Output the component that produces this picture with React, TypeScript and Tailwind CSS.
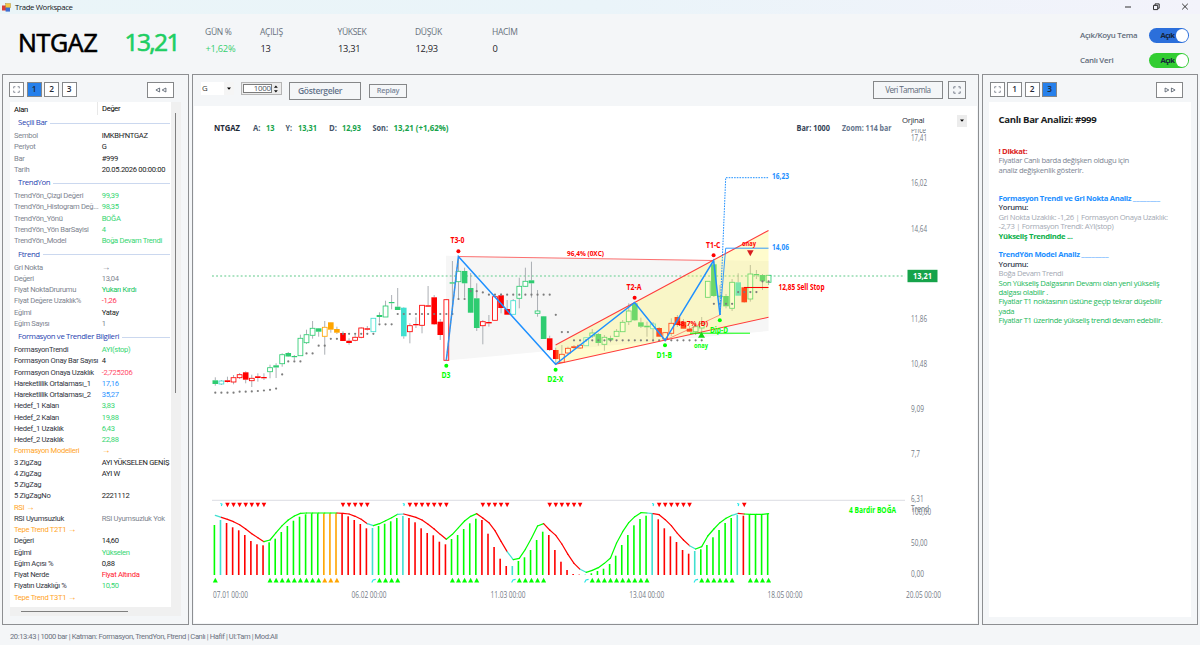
import React from "react";

type Bar = [string, number, number, number, number]; // kind, high, top, bottom, low

const GREEN = "#2ecc71";
const RED = "#ff0000";
const CYAN = "#40e0d0";
const ORANGE = "#ffa500";
const LIME = "#00ff00";

const KIND: Record<string, string> = { g: GREEN, r: RED, c: CYAN, o: ORANGE };

// Lower-case kinds are filled bodies, upper-case kinds are hollow ones.
const BARS: Bar[] = [
  ["g", 377.3, 380.3, 384, 385.7], ["C", 380, 381, 384, 385], ["r", 376.7, 380.3, 382, 382.5],
  ["R", 375, 377.7, 382, 384.3], ["R", 373, 374.7, 377.7, 379], ["r", 371.3, 372.3, 379.7, 383.3],
  ["R", 374.7, 378.3, 380.7, 387], ["r", 373.3, 376.3, 378, 381.7], ["r", 373.3, 377, 378.3, 380],
  ["G", 364.7, 367.7, 371.7, 378.3], ["g", 363.3, 365.3, 367.5, 378], ["G", 353.3, 354.7, 363.7, 366.7],
  ["g", 352, 353, 356.5, 357], ["g", 355, 356, 357.2, 360], ["G", 334.7, 338.3, 355.7, 355.7],
  ["G", 329.7, 334.7, 342.7, 344], ["G", 321, 328.3, 335.3, 338.7], ["g", 328, 328.3, 331.7, 336.7],
  ["O", 321, 327.3, 336.3, 354.7], ["o", 322, 322.3, 329.7, 332.7], ["o", 326.7, 329, 332.7, 334],
  ["r", 331.3, 333, 341, 341], ["r", 338.3, 340.7, 343, 344.7], ["R", 335, 337.3, 340.3, 341.3],
  ["R", 327.3, 328, 337.3, 338.3], ["r", 326, 328.3, 329.7, 330.5], ["C", 318, 318.3, 331.7, 332],
  ["g", 312.3, 315, 317, 322.7], ["G", 300.7, 306, 317, 317], ["g", 295, 302, 303.2, 309.3],
  ["g", 288, 306.7, 310, 310], ["c", 307, 307.7, 336.3, 338.7], ["R", 323.3, 325.7, 331.7, 343.3],
  ["r", 317.3, 324, 325.3, 328], ["R", 305.3, 305.3, 325.3, 333.3], ["r", 286, 305.3, 306.7, 307],
  ["r", 295, 297.3, 324.3, 325], ["r", 319, 321.7, 335, 340], ["R", 299, 299.7, 360.3, 360.3],
  ["g", 261, 282.3, 283.6, 314], ["G", 257, 271.3, 281.7, 298.3], ["g", 267.7, 271, 283.3, 297.7],
  ["g", 273, 288, 312.7, 313], ["g", 283.3, 298.3, 328, 331], ["R", 320, 321.7, 325.7, 344.3],
  ["r", 315, 322, 323.4, 326.7], ["R", 296.7, 296.7, 320.3, 320.3], ["r", 293.3, 295.3, 308, 313.3],
  ["r", 300, 309, 314.7, 314.7], ["C", 299, 300.7, 314.3, 314.3], ["G", 277.7, 286.3, 298.3, 308.3],
  ["G", 267.7, 281.3, 286.3, 287], ["g", 261.7, 280.3, 283.3, 297.7], ["G", 290, 311, 313.3, 316.7],
  ["g", 316, 316.3, 339, 339], ["r", 335.7, 338.3, 350, 351], ["r", 347.7, 350, 359, 364],
  ["R", 345, 354.3, 362.3, 363], ["R", 346.7, 348.3, 353, 354], ["r", 345, 346.3, 348, 349],
  ["R", 344, 345.3, 348, 349], ["C", 337, 337.7, 345.7, 346], ["G", 329, 333, 336, 338],
  ["g", 333, 334, 343, 345.7], ["G", 335, 337.3, 344.3, 350.7], ["g", 335.7, 338, 340.3, 342.3],
  ["G", 329, 331.3, 336.3, 337], ["G", 320, 322.3, 331.7, 332], ["G", 303.3, 311, 321.7, 325],
  ["g", 303, 303.3, 320.3, 321], ["g", 317.7, 322.3, 326.7, 328], ["g", 321.7, 325.7, 327.3, 336.7],
  ["C", 322, 324, 328.7, 341.7], ["r", 327, 328, 336.7, 337], ["R", 332, 332.7, 339, 340],
  ["R", 318.3, 323.3, 333.3, 336], ["r", 315, 317, 325, 327], ["r", 319, 321.7, 328.7, 329],
  ["r", 326, 328.7, 331.7, 332], ["G", 322, 326.7, 331.7, 335], ["G", 317, 323.3, 328, 336],
  ["G", 281, 281.3, 297.3, 298], ["g", 261, 264.3, 296, 297], ["g", 285, 295.7, 297.2, 314],
  ["g", 294, 296, 306.3, 308.3], ["G", 279, 282.3, 308.3, 311], ["c", 273.3, 282.3, 295.7, 296],
  ["r", 287, 287.3, 302.3, 303], ["G", 265, 274, 299, 301.7], ["g", 270, 274, 275.3, 279],
  ["g", 274, 275, 281.3, 290], ["G", 275, 275.3, 282.3, 285],
];

// [first bar, last bar, y]
const DOTS: [number, number, number][] = [
  [0, 3, 392.7], [4, 5, 391.7], [6, 6, 391.4], [7, 7, 391], [8, 8, 390.5], [9, 9, 389.8], [10, 10, 388.6],
  [11, 11, 374.4], [12, 14, 361.4], [15, 16, 353.4], [17, 18, 345.7], [19, 20, 338.8], [21, 26, 333.8],
  [27, 29, 324.3], [30, 39, 314], [40, 41, 299], [42, 43, 291.2], [44, 44, 292.4], [45, 55, 294.7],
  [56, 56, 314.8], [57, 58, 332.1], [59, 80, 340.3], [82, 85, 303.8], [86, 89, 292.1], [90, 91, 281.4],
];

// [colour, first bar, bar tops]
const HISTOGRAM: [string, number, number[]][] = [
  [LIME, 0, [525]], [CYAN, 1, [520]], [RED, 2, [523, 527.3, 530.3, 535, 541, 544.3, 545.3]],
  [LIME, 9, [542.3, 538.7, 532, 526, 520.7, 516.7, 514.3, 513.3, 513.3]],
  [ORANGE, 18, [513.3, 513.3, 513.3]], [RED, 21, [513.3, 516.3, 520, 524, 528.3]], [CYAN, 26, [528]],
  [LIME, 27, [526, 523.7, 521.3, 518]], [CYAN, 31, [516]],
  [RED, 32, [518, 522.3, 528.3, 533, 535.3, 541.7, 544.3]],
  [LIME, 39, [539, 535, 529, 523.3, 518.7]], [RED, 44, [520, 533.7, 547, 558.7, 566]], [CYAN, 49, [566]],
  [LIME, 50, [561, 557.3, 550, 540, 531.7]], [RED, 55, [535, 550, 561.7, 570, 574, 574.6]], [CYAN, 61, [574.6]],
  [LIME, 62, [573.3, 571, 568.7, 564, 555.7, 545, 535, 525.3, 519, 515.7]], [CYAN, 72, [514]],
  [RED, 73, [519.3, 528.3, 536.3, 542, 550, 553.7]], [CYAN, 79, [551]],
  [LIME, 80, [549.3, 545, 537.3, 530, 523, 518]], [CYAN, 86, [515]], [RED, 87, [515.7]],
  [LIME, 88, [514.3, 514.3, 514.3, 513.7]],
];

const CURVE = [
  76, 82, 88, 95, 104, 117, 131, 143, 155, 150, 128, 107, 90, 78, 70, 69, 69, 69, 69, 69, 69, 70, 72, 79, 88, 101, 107,
  101, 92, 83, 73, 72, 77, 82, 90, 103, 117, 133, 148, 133, 113, 93, 79, 71, 84, 98, 122, 154, 185, 209, 205, 178, 145,
  108, 101, 120, 136, 162, 193, 220, 238, 247, 241, 233, 220, 204, 159, 125, 98, 80, 68, 69, 71, 74, 89, 107, 130, 150,
  167, 177, 170, 138, 117, 98, 85, 76, 70, 72, 73, 73, 73, 71,
].map((v) => 490 + v / 3);

const barX = (i: number) => 215.3 + i * 6.08;

const COLORS: string[] = HISTOGRAM.flatMap(([color, , tops]) => tops.map(() => color));

type LabelProps = {
  x: number;
  y: number;
  w: number;
  fill: string;
  size?: number;
  weight?: number;
  children: string;
};

function Label({ x, y, w, fill, size = 8.1, weight = 400, children }: LabelProps) {
  return (
    <text x={x} y={y + size * 0.36} fill={fill} fontSize={size} fontWeight={weight} textLength={w} lengthAdjust="spacingAndGlyphs">
      {children}
    </text>
  );
}

function Chart() {
  return (
    <svg viewBox="194 106 783 517" width="783" height="517" className="block">
      <polygon points="446,255.8 768.5,261 768.5,331 446,360.5" fill="#f6f6f6" />
      <line x1="212" x2="905" y1="276" y2="276" stroke="#93dbb0" strokeWidth="1.4" strokeDasharray="1.9 2.2" />

      {BARS.map(([kind, high, top, bottom, low], i) => {
        const solid = kind === kind.toLowerCase();
        const color = KIND[kind.toLowerCase()];
        const x = barX(i);
        return (
          <g key={i}>
            <line x1={x} x2={x} y1={high} y2={top} stroke="#a3a7ad" strokeWidth="0.9" />
            <line x1={x} x2={x} y1={bottom} y2={low} stroke="#a3a7ad" strokeWidth="0.9" />
            <rect
              x={solid ? x - 2.8 : x - 2.4}
              y={top}
              width={solid ? 5.6 : 4.8}
              height={bottom - top}
              fill={solid ? color : "#ffffff"}
              stroke={solid ? "none" : color}
              strokeWidth="0.85"
            />
          </g>
        );
      })}

      <polygon points="555.6,345 768.5,230.5 768.5,317.3 555.6,364.3" fill="#fff65a" fillOpacity="0.3" />

      {DOTS.flatMap(([from, to, y]) =>
        Array.from({ length: to - from + 1 }, (_, k) => (
          <circle key={`${from + k}-${y}`} cx={barX(from + k)} cy={y} r="1.1" fill="#7d7d7d" />
        )),
      )}

      <g fill="none" stroke="#ff3b3b" strokeWidth="1.1">
        <path d="M555.6 345 768.5 230.5M555.6 364.3 768.5 317.3" />
        <path d="M458.4 256.5 713.5 260.5" strokeWidth="0.9" strokeOpacity="0.8" />
        <path d="M665 340.3 720 315" strokeWidth="0.7" strokeOpacity="0.8" />
        <path d="M744 287.5H768.5" stroke="#ff0000" />
      </g>
      <path d="M690 333.2H750" stroke={LIME} strokeWidth="1" />
      <path
        d="M446.3 360.3 458.4 256.5 555.6 364.3 634.6 302.5 665 340.3 713.6 260.5 720 315"
        fill="none"
        stroke="#1e90ff"
        strokeWidth="1.5"
      />
      <path d="M446.3 360.3 458.4 256.5" stroke="#8b8b8b" strokeWidth="0.7" strokeDasharray="2 2" />
      <path d="M720 315 725.7 248.2H768.5" fill="none" stroke="#1e90ff" strokeWidth="0.9" />
      <path d="M720 315 725.7 177.7H768.5" fill="none" stroke="#1e90ff" strokeWidth="1" strokeDasharray="1.6 1.1" />

      <g fill={RED}>
        <circle cx="458.4" cy="251.2" r="2" />
        <circle cx="634.6" cy="297.8" r="2" />
        <circle cx="713.6" cy="255.2" r="2" />
        <path d="M747 250.2H753.6L750.3 256.2Z" fill="#d81e1e" />
      </g>
      <g fill={LIME}>
        <circle cx="446.3" cy="365.7" r="2" />
        <circle cx="555.6" cy="369.8" r="2" />
        <circle cx="665" cy="345.2" r="2" />
        <circle cx="719.8" cy="320.2" r="2" />
        <path d="M698 337.8H705L701.5 331.8Z" fill="#16d916" />
      </g>

      <Label x={450.5} y={240.5} w={14} fill={RED} weight={700}>T3-0</Label>
      <Label x={567} y={253.8} w={37} fill={RED} weight={700} size={7.4}>96,4% (0XC)</Label>
      <Label x={626.5} y={287.3} w={15} fill={RED} weight={700}>T2-A</Label>
      <Label x={706} y={244.8} w={14.5} fill={RED} weight={700}>T1-C</Label>
      <Label x={742} y={243.2} w={14} fill={RED} weight={700} size={7.4}>onay</Label>
      <Label x={677} y={323.3} w={31} fill={RED} weight={700} size={7.4}>48,7% (D)</Label>
      <Label x={778.5} y={286.6} w={46} fill={RED} weight={700}>12,85 Sell Stop</Label>
      <Label x={441.5} y={375.4} w={9} fill={LIME} weight={700}>D3</Label>
      <Label x={547.3} y={379.2} w={16} fill={LIME} weight={700}>D2-X</Label>
      <Label x={656.5} y={354.8} w={15.5} fill={LIME} weight={700}>D1-B</Label>
      <Label x={710} y={330.3} w={18} fill={LIME} weight={700}>Dip-D</Label>
      <Label x={694} y={345.3} w={14} fill={LIME} weight={700} size={7.4}>onay</Label>
      <Label x={772} y={176.4} w={17} fill="#1e90ff" weight={700}>16,23</Label>
      <Label x={772} y={247.2} w={17} fill="#1e90ff" weight={700}>14,06</Label>

      <Label x={214} y={128} w={26} fill="#1f2937" weight={700}>NTGAZ</Label>
      <Label x={253} y={128} w={7.5} fill="#475569" weight={700}>A:</Label>
      <Label x={266} y={128} w={8.5} fill="#16a34a" weight={700}>13</Label>
      <Label x={285.5} y={128} w={6.5} fill="#475569" weight={700}>Y:</Label>
      <Label x={298} y={128} w={19} fill="#16a34a" weight={700}>13,31</Label>
      <Label x={329} y={128} w={8} fill="#475569" weight={700}>D:</Label>
      <Label x={342} y={128} w={19} fill="#16a34a" weight={700}>12,93</Label>
      <Label x={372.5} y={128} w={15.5} fill="#475569" weight={700}>Son:</Label>
      <Label x={393.5} y={128} w={55} fill="#16a34a" weight={700}>13,21 (+1,62%)</Label>
      <Label x={796.5} y={128} w={33.5} fill="#334155" weight={700}>Bar: 1000</Label>
      <Label x={842} y={128} w={49.5} fill="#64748b" weight={700}>Zoom: 114 bar</Label>

      <Label x={911} y={129.6} w={15} fill="#6b7280">Price</Label>
      <rect x="899" y="113" width="70" height="16" fill="#ffffff" />
      {([["17,41", 138.5, 16], ["16,02", 183.5, 16], ["14,64", 228.7, 16], ["11,86", 319.3, 16], ["10,48", 364.3, 16],
        ["9,09", 409.3, 13], ["7,7", 454.5, 9], ["6,31", 499.4, 12.5], ["50,00", 543.2, 16.5], ["0,00", 573.8, 13]] as [string, number, number][]).map(
        ([text, y, w]) => (
          <Label key={text} x={911} y={y} w={w} fill="#737a85">{text}</Label>
        ),
      )}
      <Label x={911} y={509} w={18} fill="#737a85">Trend</Label>
      <Label x={911.5} y={512.4} w={19.5} fill="#737a85">100,00</Label>
      <rect x="907.5" y="269.8" width="30" height="12.4" fill="#16a34a" />
      <Label x={913} y={276} w={19} fill="#ffffff" weight={700}>13,21</Label>

      <line x1="212" x2="905" y1="500.3" y2="500.3" stroke="#e2e3e8" strokeWidth="1.2" />
      <Label x={849} y={510.5} w={47} fill={LIME} weight={700}>4 Bardir BOĞA</Label>

      {HISTOGRAM.flatMap(([color, first, tops]) =>
        tops.map((top, k) => (
          <rect key={first + k} x={barX(first + k) - 1.7} y={top} width="1.6" height={575 - top} fill={color} />
        )),
      )}
      {CURVE.slice(1).map((y, k) => (
        <line
          key={k}
          x1={barX(k)}
          y1={CURVE[k]}
          x2={barX(k + 1)}
          y2={y}
          stroke={COLORS[k + 1] === ORANGE ? LIME : COLORS[k + 1]}
          strokeWidth="1.2"
          strokeLinecap="round"
        />
      ))}
      {COLORS.map((color, i) => {
        const x = barX(i);
        if (color === RED) return <path key={i} d={`M${x - 2.3} 502.8H${x + 2.3}L${x} 507.2Z`} fill={RED} />;
        if (color === CYAN) {
          const upper = [1, 31, 72, 86].includes(i);
          return upper ? (
            <path key={i} d={`M${x - 1} 503.4l1.6 .6l-.6 2`} fill="none" stroke="#22e6e6" strokeWidth="1.1" />
          ) : (
            <path key={i} d={`M${x - 1.6} 582.6l1.4-2.6l2.6-.6`} fill="none" stroke="#22e6e6" strokeWidth="1.1" />
          );
        }
        return <path key={i} d={`M${x - 2.5} 582.6H${x + 2.5}L${x} 577.8Z`} fill={color} />;
      })}

      {([["07.01 00:00", 213], ["06.02 00:00", 351.5], ["11.03 00:00", 490.5], ["13.04 00:00", 629.3], ["18.05 00:00", 767.5],
        ["20.05 00:00", 906]] as [string, number][]).map(([text, x]) => (
        <Label key={text} x={x} y={594.8} w={35} fill="#737a85">{text}</Label>
      ))}
    </svg>
  );
}

type Row = [string, string, string?, string?]; // field, value, value colour, field colour

const DIM = "text-[#808590]";
const G = "text-[#35d672]";
const K = "text-[#1b1d24]";
const DARK = "text-[#33363f]";
const O = "text-[#ffa51f]";
const B = "text-[#2f95ff]";

const GROUPS: { title: string; rows: Row[] }[] = [
  {
    title: "Seçili Bar",
    rows: [["Sembol", "IMKBH'NTGAZ"], ["Periyot", "G"], ["Bar", "#999"], ["Tarih", "20.05.2026 00:00:00"]],
  },
  {
    title: "TrendYon",
    rows: [
      ["TrendYön_Çizgi Değeri", "99,39", G], ["TrendYön_Histogram Değ...", "98,35", G], ["TrendYön_Yönü", "BOĞA", G],
      ["TrendYön_Yön BarSayisi", "4", G], ["TrendYön_Model", "Boğa Devam Trendi", G],
    ],
  },
  {
    title: "Ftrend",
    rows: [
      ["Gri Nokta", "→", DIM], ["Değeri", "13,04", DIM], ["Fiyat NoktaDrurumu", "Yukarı Kırdı", "text-[#0fc45a]"],
      ["Fiyat Değere Uzaklık%", "-1,26", "text-[#ff3355]"], ["Eğimi", "Yatay"], ["Eğim Sayısı", "1", DIM],
    ],
  },
  {
    title: "Formasyon ve Trendler Bilgileri",
    rows: [
      ["FormasyonTrendi", "AYI(stop)", G, DARK], ["Formasyon Onay Bar Sayısı", "4", K, DARK],
      ["Formasyon Onaya Uzaklık", "-2,725206", "text-[#ff4d6a]", DARK], ["Hareketlilik Ortalaması_1", "17,16", B, DARK],
      ["Hareketlilik Ortalaması_2", "35,27", B, DARK], ["Hedef_1 Kalan", "3,83", G, DARK], ["Hedef_2 Kalan", "19,88", G, DARK],
      ["Hedef_1 Uzaklık", "6,43", G, DARK], ["Hedef_2 Uzaklık", "22,88", G, DARK], ["Formasyon Modelleri", "→", O, O],
      ["3 ZigZag", "AYI YÜKSELEN GENİŞ", K, DARK], ["4 ZigZag", "AYI W", K, DARK], ["5 ZigZag", "", K, DARK],
      ["5 ZigZagNo", "2221112", K, DARK], ["RSI →", "", O, O], ["RSI Uyumsuzluk", "RSI Uyumsuzluk Yok", DIM, DARK],
      ["Tepe Trend T2T1 →", "", O, O], ["Değeri", "14,60", K, DARK], ["Eğimi", "Yükselen", G, DARK],
      ["Eğim Açısı %", "0,88", K, DARK], ["Fiyat Nerde", "Fiyat Altında", "text-[#ff1a2e]", DARK],
      ["Fiyatın Uzaklığı %", "10,50", G, DARK], ["Tepe Trend T3T1 →", "", O, O],
    ],
  },
];

const BUTTON = "flex items-center justify-center border border-[#858789] bg-white";

function CellText({ text }: { text: string }) {
  if (!text.endsWith("→")) return <>{text}</>;
  return (
    <>
      {text.slice(0, -1)}
      <span className="font-['Liberation_Sans',sans-serif] text-[8.5px]">→</span>
    </>
  );
}

function ExpandIcon({ className }: { className: string }) {
  return (
    <svg viewBox="0 0 8 8" className={className} fill="none" stroke="#6b7280" strokeWidth="0.9">
      <path d="M.8 2.7V.8H2.7M5.3.8H7.2V2.7M7.2 5.3V7.2H5.3M2.7 7.2H.8V5.3" />
    </svg>
  );
}

function TabButtons({ active }: { active: number }) {
  return (
    <div className="flex gap-[2.5px]">
      <button className={`${BUTTON} h-[15px] w-[15px]`}>
        <ExpandIcon className="h-[7px] w-[7px]" />
      </button>
      {[1, 2, 3].map((n) => (
        <button
          key={n}
          className={`flex h-[15px] w-[15px] items-center justify-center border border-[#858789] text-[8.3px] font-semibold text-[#1f2937] ${
            n === active ? "bg-[#2680eb]" : "bg-white"
          }`}
        >
          {n}
        </button>
      ))}
    </div>
  );
}

function DoubleArrow({ flip }: { flip?: boolean }) {
  return (
    <svg viewBox="0 0 12 6" className={`h-[6px] w-[12px] ${flip ? "-scale-x-100" : ""}`} fill="none" stroke="#4b5563" strokeWidth="0.8">
      <path d="M4.6 1V5L.9 3ZM10.9 1V5L7.2 3Z" />
    </svg>
  );
}

function TitleBar() {
  return (
    <div className="flex h-[14px] items-center bg-gradient-to-r from-[#eaf5f8] via-[#eaf4f9] to-[#f3f3fb] pl-[2px]">
      <svg viewBox="0 0 9 9" className="h-[9px] w-[9px]">
        <rect x="0" y="2.5" width="5" height="5" fill="#d9403a" />
        <rect x="3.6" y=".5" width="5" height="4.4" fill="#f6c744" stroke="#a98a3c" strokeWidth=".4" />
        <rect x="3.6" y="4.6" width="4.4" height="4" fill="#3f6fd1" />
      </svg>
      <span className="mt-px ml-[4px] text-[7.8px] tracking-[-0.37px] text-[#15181d]">Trade Workspace</span>
      <svg viewBox="0 0 66 10" className="mr-[9px] ml-auto h-[10px] w-[66px]" fill="none" stroke="#1c1c1c" strokeWidth="0.9">
        <path d="M0 5H6M28.5 3.4H32.7V7.6H28.5ZM30 3.2V1.9H34.2V6.2H32.9M57.2 1.8 62.8 7.4M62.8 1.8 57.2 7.4" />
      </svg>
    </div>
  );
}

function Stat({ label, value, className }: { label: string; value: string; className: string }) {
  return (
    <div className={className}>
      <div className="h-[17px] text-[8.5px] leading-[11px] tracking-[-0.3px] text-[#66707c]">{label}</div>
      <div className={`pl-[0.5px] text-[9.3px] leading-[11px] tracking-[-0.25px] ${label === "GÜN %" ? "text-[#35cf6f]" : "text-[#1f2328]"}`}>
        {value}
      </div>
    </div>
  );
}

function Toggle({ label, track }: { label: string; track: string }) {
  return (
    <div className="flex h-[15px] items-center">
      <span className="w-[69px] text-[7.9px] font-semibold tracking-[-0.28px] text-[#5f6b7a]">{label}</span>
      <span className={`flex h-[15px] w-[40px] items-center rounded-full pl-[11.5px] ${track}`}>
        <span className="w-[15px] text-[7.6px] font-bold tracking-[-0.55px] text-[#15243a]">Açık</span>
        <span className="h-[12.5px] w-[12.5px] shrink-0 rounded-full bg-white" />
      </span>
    </div>
  );
}

function Header() {
  return (
    <header className="flex h-[60px] pl-[18px]">
      <h1 className="mt-[9.5px] w-[106.5px] text-[25px] leading-[36px] tracking-[-0.3px] text-black [-webkit-text-stroke:0.65px_#000]">NTGAZ</h1>
      <div className="mt-[9.5px] w-[80.5px] text-[24.5px] leading-[36px] tracking-[-1.6px] text-[#1fce63] [-webkit-text-stroke:0.65px_#1fce63]">
        13,21
      </div>
      <div className="flex pt-[12px]">
        <Stat label="GÜN %" value="+1,62%" className="w-[55px]" />
        <Stat label="AÇILIŞ" value="13" className="w-[77.5px]" />
        <Stat label="YÜKSEK" value="13,31" className="w-[77.5px]" />
        <Stat label="DÜŞÜK" value="12,93" className="w-[77px]" />
        <Stat label="HACİM" value="0" className="w-[60px]" />
      </div>
      <div className="mr-[11px] ml-auto flex flex-col gap-[10px] pt-[14px]">
        <Toggle label="Açık/Koyu Tema" track="bg-[#2b6fdb]" />
        <Toggle label="Canlı Veri" track="bg-[#32cd32]" />
      </div>
    </header>
  );
}

function FieldPanel() {
  return (
    <section className="flex w-[187px] flex-col border border-[#8d8f92] pr-[7px] pl-[6px]">
      <div className="flex h-[27px] items-start justify-between pt-[7px] pr-[7px]">
        <TabButtons active={1} />
        <button className={`${BUTTON} h-[15.5px] w-[27px]`}>
          <DoubleArrow />
        </button>
      </div>
      <div className="ml-[1px] flex h-[514px] w-[171px] bg-[#f0f0f0]">
        <div className="flex w-[161px] flex-col">
          <div className="h-[504.5px] overflow-hidden bg-white font-['Roboto','Open_Sans',sans-serif] text-[7.6px] tracking-[-0.31px]">
            <div className="flex h-[13px] items-center pl-[4px] text-black">
              <span className="h-full w-[83.5px] border-r border-[#e8e8e8] leading-[15px]">Alan</span>
              <span className="pl-[4.5px] leading-[15px]">Değer</span>
            </div>
            {GROUPS.map((group) => (
              <div key={group.title}>
                <div className="flex h-[15.1px] items-center gap-[3px] pt-px pr-px pl-[8px] font-['Open_Sans',sans-serif]">
                  <span className="text-[7.8px] tracking-[-0.37px] whitespace-nowrap text-[#1f3fb0]">{group.title}</span>
                  <span className="h-px flex-1 bg-[#cbd8ef]" />
                </div>
                {group.rows.map(([field, value, valueColor = K, fieldColor = DIM], i) => (
                  <div key={i} className="flex h-[11.26px] items-center pl-[4px] leading-[11.26px] whitespace-nowrap">
                    <span className={`w-[87.7px] shrink-0 ${fieldColor}`}>
                      <CellText text={field} />
                    </span>
                    <span className={valueColor}>
                      <CellText text={value} />
                    </span>
                  </div>
                ))}
              </div>
            ))}
          </div>
          <div className="flex flex-1 items-center pl-[11px]">
            <span className="h-px w-[107px] bg-[#7f7f7f]" />
          </div>
        </div>
        <div className="flex-1 pt-[11px] pl-[4px]">
          <div className="h-[280px] w-px bg-[#7f7f7f]" />
        </div>
      </div>
    </section>
  );
}

function ChartPanel() {
  return (
    <section className="flex w-[787px] flex-col border border-[#8d8f92] px-[1px]">
      <div className="flex h-[31px] shrink-0 items-start pt-[7px] pl-[7px]">
        <div className="flex h-[13px] w-[33px] items-center justify-between bg-white pl-[1px] text-[7.8px] text-[#333]">
          G
          <span className="flex h-full w-[10px] items-center justify-center bg-[#f5f5f5]">
            <svg viewBox="0 0 4 3" className="h-[3px] w-[4px]"><path d="M0 .4H4L2 2.8Z" fill="#000" /></svg>
          </span>
        </div>
        <div className="ml-[6.5px] flex h-[13px] w-[41px] items-center justify-between border border-[#b5b5b5] bg-[#ececec] p-px">
          <span className="flex h-full w-[30px] items-center justify-end border border-[#7c7c7c] bg-white text-[7.9px] tracking-[-0.3px] text-[#4a5260]">1000</span>
          <svg viewBox="0 0 8 10" className="h-[10px] w-[8px]"><path d="M2 3.6H6L4 1.4ZM2 6.4H6L4 8.6Z" fill="#111" /></svg>
        </div>
        <button className="ml-[7.5px] flex h-[18px] w-[72px] items-center border border-[#858789] pl-[8px] text-[8.5px] font-semibold tracking-[-0.35px] text-[#64748b]">Göstergeler</button>
        <button className="mt-[1.5px] ml-[8px] flex h-[14px] w-[38px] items-center justify-center border border-[#858789] text-[7.4px] font-semibold tracking-[-0.25px] text-[#7b879a]">Replay</button>
        <button className="mt-[-1px] mr-[5.5px] ml-auto flex h-[18px] w-[69.5px] items-center justify-center border border-[#858789] text-[8.2px] tracking-[-0.6px] text-[#5f6b7a]">Veri Tamamla</button>
        <button className="mt-[-1px] mr-[11px] flex h-[18px] w-[18px] items-center justify-center border border-[#858789]">
          <ExpandIcon className="h-[8px] w-[8px]" />
        </button>
      </div>
      <div className="relative bg-white">
        <Chart />
        <div className="absolute top-[8px] left-[708px] flex h-[13px] w-[65px] items-center justify-between text-[7.8px] tracking-[-0.3px] text-[#1f2937]">
          Orjinal
          <span className="flex h-[12px] w-[10px] items-center justify-center bg-[#ececec]">
            <svg viewBox="0 0 4 3" className="h-[3px] w-[4px]"><path d="M0 .4H4L2 2.8Z" fill="#000" /></svg>
          </span>
        </div>
      </div>
    </section>
  );
}

function AnalysisPanel() {
  return (
    <section className="flex w-[216px] flex-col border border-[#8d8f92] px-[6px]">
      <div className="flex h-[27px] items-start justify-between pt-[7px] pr-[8px] pl-[0.5px]">
        <TabButtons active={3} />
        <button className={`${BUTTON} h-[15.5px] w-[27px]`}>
          <DoubleArrow flip />
        </button>
      </div>
      <div className="h-[515px] bg-white pt-[11px] pr-[8px] pl-[9.5px] text-[7.7px] leading-[9.4px] tracking-[-0.33px] whitespace-nowrap">
        <h2 className="text-[9.6px] leading-[13px] font-bold tracking-[-0.34px] text-[#1a1d24]">Canlı Bar Analizi: #999</h2>
        <div className="mt-[21px]">
          <p className="font-bold text-[#dc2626]">! Dikkat:</p>
          <p className="text-[#7d8593]">Fiyatlar Canlı barda değişken oldugu için</p>
          <p className="text-[#7d8593]">analiz değişkenlik gösterir.</p>
        </div>
        <div className="mt-[18.8px]">
          <p className="font-bold tracking-[-0.34px] text-[#1e90ff]">
            Formasyon Trendi ve Gri Nokta Analiz <span className="font-normal tracking-[0.05px]">________</span>
          </p>
          <p className="font-semibold tracking-[-0.3px] text-[#374151]">Yorumu:</p>
          <p className="text-[#a3a9b3]">Gri Nokta Uzaklık: -1,26 | Formasyon Onaya Uzaklık:</p>
          <p className="text-[#a3a9b3]">-2,73 | Formasyon Trendi: AYI(stop)</p>
          <p className="font-bold text-[#0db14b]">Yükseliş Trendinde ...</p>
        </div>
        <div className="mt-[9.4px]">
          <p className="font-bold tracking-[-0.34px] text-[#1e90ff]">
            TrendYön Model Analiz <span className="font-normal tracking-[0.05px]">________</span>
          </p>
          <p className="font-semibold tracking-[-0.3px] text-[#374151]">Yorumu:</p>
          <p className="text-[#a3a9b3]">Boğa Devam Trendi</p>
          <p className="text-[#1bb85a]">Son Yükseliş Dalgasının Devamı olan yeni yükseliş</p>
          <p className="text-[#1bb85a]">dalgası olabilir .</p>
          <p className="text-[#1bb85a]">Fiyatlar T1 noktasının üstüne geçip tekrar düşebilir</p>
          <p className="text-[#1bb85a]">yada</p>
          <p className="text-[#1bb85a]">Fiyatlar T1 üzerinde yükseliş trendi devam edebilir.</p>
        </div>
      </div>
    </section>
  );
}

export default function App() {
  return (
    <div className="flex h-[645px] w-[1200px] flex-col overflow-hidden bg-[#f4f6f8] font-['Open_Sans','Noto_Sans',sans-serif]">
      <TitleBar />
      <Header />
      <main className="flex h-[551px] gap-[3px] pl-[2px]">
        <FieldPanel />
        <ChartPanel />
        <AnalysisPanel />
      </main>
      <footer className="flex flex-1 items-center pt-[3px] pl-[10px] font-['Roboto','Open_Sans',sans-serif] text-[7.6px] tracking-[-0.4px] text-[#6b7280]">
        20:13:43 | 1000 bar | Katman: Formasyon, TrendYon, Ftrend | Canlı | Hafif | UI:Tam | Mod:All
      </footer>
    </div>
  );
}
